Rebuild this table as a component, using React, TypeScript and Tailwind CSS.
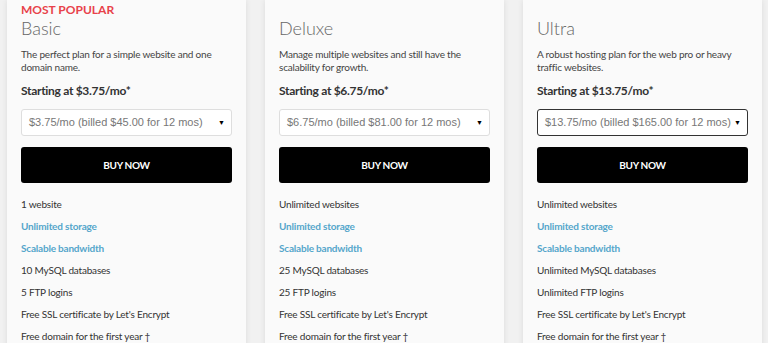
import React from "react";

type Plan = {
  popular?: boolean;
  name: string;
  desc: string[];
  start: string;
  option: string;
  focused?: boolean;
  features: { text: string; blue?: boolean }[];
};

const plans: Plan[] = [
  {
    popular: true,
    name: "Basic",
    desc: ["The perfect plan for a simple website and one", "domain name."],
    start: "Starting at $3.75/mo*",
    option: "$3.75/mo (billed $45.00 for 12 mos)",
    features: [
      { text: "1 website" },
      { text: "Unlimited storage", blue: true },
      { text: "Scalable bandwidth", blue: true },
      { text: "10 MySQL databases" },
      { text: "5 FTP logins" },
      { text: "Free SSL certificate by Let's Encrypt" },
      { text: "Free domain for the first year †" },
    ],
  },
  {
    name: "Deluxe",
    desc: ["Manage multiple websites and still have the", "scalability for growth."],
    start: "Starting at $6.75/mo*",
    option: "$6.75/mo (billed $81.00 for 12 mos)",
    features: [
      { text: "Unlimited websites" },
      { text: "Unlimited storage", blue: true },
      { text: "Scalable bandwidth", blue: true },
      { text: "25 MySQL databases" },
      { text: "25 FTP logins" },
      { text: "Free SSL certificate by Let's Encrypt" },
      { text: "Free domain for the first year †" },
    ],
  },
  {
    name: "Ultra",
    desc: ["A robust hosting plan for the web pro or heavy", "traffic websites."],
    start: "Starting at $13.75/mo*",
    option: "$13.75/mo (billed $165.00 for 12 mos)",
    focused: true,
    features: [
      { text: "Unlimited websites" },
      { text: "Unlimited storage", blue: true },
      { text: "Scalable bandwidth", blue: true },
      { text: "Unlimited MySQL databases" },
      { text: "Unlimited FTP logins" },
      { text: "Free SSL certificate by Let's Encrypt" },
      { text: "Free domain for the first year †" },
    ],
  },
];

function Card({ p }: { p: Plan }) {
  return (
    <div className="bg-[#fafafa] shadow-[0_0_6px_rgba(0,0,0,0.09)] px-[14px] pt-[3px] pb-[40px]">
      <div className="h-[14px] text-[12px] leading-[14px] font-bold text-[#e8424a] uppercase">
        {p.popular ? "Most Popular" : ""}
      </div>
      <div className="text-[18px] leading-[22px] font-light text-[#666]">{p.name}</div>
      <div className="mt-[9px] text-[10px] leading-[13px] tracking-[-0.2px] text-[#444] whitespace-nowrap">
        {p.desc.map((d, i) => (
          <div key={i}>{d}</div>
        ))}
      </div>
      <div className="mt-[9px] text-[12px] leading-[15px] tracking-[-0.3px] font-bold text-[#333]">{p.start}</div>
      <div
        className={
          "mt-[11px] h-[27px] flex items-center justify-between pl-[7px] pr-[6px] bg-white rounded-[3px] " +
          (p.focused ? "border-[1.5px] border-[#333]" : "border border-[#dedede]")
        }
      >
        <span className="text-[11px] text-[#777] font-['Liberation_Sans',Arial,sans-serif] whitespace-nowrap">
          {p.option}
        </span>
        <span className="text-[7px] text-black">▼</span>
      </div>
      <button className="mt-[11px] w-full h-[36px] bg-black rounded-[3px] text-white text-[10px] font-bold tracking-[-0.3px] flex items-center justify-center">
        BUY NOW
      </button>
      <ul className="mt-[10px] text-[10px] leading-[22px] tracking-[-0.2px] text-[#333] whitespace-nowrap">
        {p.features.map((f, i) => (
          <li key={i} className={f.blue ? "font-bold text-[#55a6cb]" : ""}>
            {f.text}
          </li>
        ))}
      </ul>
    </div>
  );
}

export default function App() {
  return (
    <div className="w-[768px] h-[343px] overflow-hidden bg-[#f1f1f1] font-['Lato','Noto_Sans',sans-serif]">
      <div className="grid grid-cols-3 gap-[19px] pl-[7px] pr-[6px]">
        {plans.map((p) => (
          <Card key={p.name} p={p} />
        ))}
      </div>
    </div>
  );
}
